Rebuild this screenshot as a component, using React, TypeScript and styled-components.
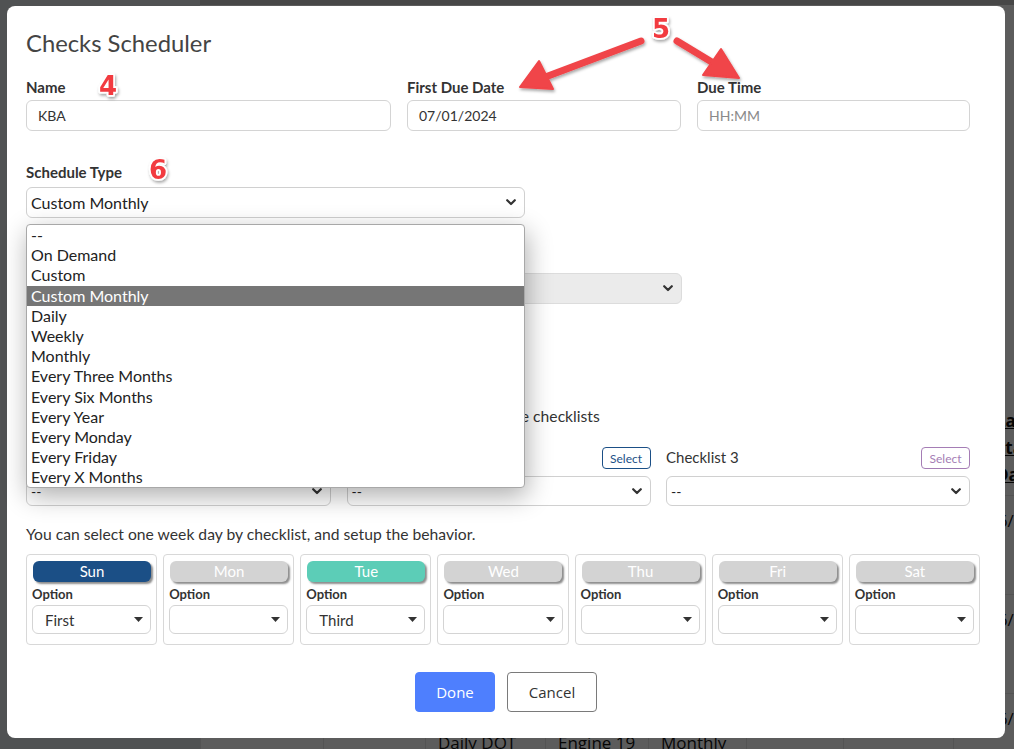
import React from "react";
import styled, { createGlobalStyle } from "styled-components";

const GlobalStyle = createGlobalStyle`
  html, body { margin: 0; padding: 0; }
  body { font-family: Lato, "Open Sans", Arial, sans-serif; background: #fff; }
  * { box-sizing: border-box; }
`;

const scheduleOptions = [
  "--",
  "On Demand",
  "Custom",
  "Custom Monthly",
  "Daily",
  "Weekly",
  "Monthly",
  "Every Three Months",
  "Every Six Months",
  "Every Year",
  "Every Monday",
  "Every Friday",
  "Every X Months",
];

const checklists = [
  { label: "Checklist 1", tone: "#3bb39c" },
  { label: "Checklist 2", tone: "#1b4f86" },
  { label: "Checklist 3", tone: "#a57db5" },
];

const days = [
  { name: "Sun", tone: "#1b4f86", value: "First" },
  { name: "Mon", tone: "#d3d3d3", value: "" },
  { name: "Tue", tone: "#5ccdb7", value: "Third" },
  { name: "Wed", tone: "#d3d3d3", value: "" },
  { name: "Thu", tone: "#d3d3d3", value: "" },
  { name: "Fri", tone: "#d3d3d3", value: "" },
  { name: "Sat", tone: "#d3d3d3", value: "" },
];

const rows = [
  ["", "", "Daily Walk", "Engine 12", "Weekly", "", "", "06/28/2024"],
  ["", "", "Pump Test", "Engine 7", "Daily", "", "", "06/29/2024"],
  ["", "", "Daily DOT", "Engine 19", "Monthly", "", "", "06/30/2024"],
];

/* ---------- page behind the modal ---------- */

const Page = styled.div`
  position: relative;
  width: 1014px;
  height: 749px;
  overflow: hidden;
  display: grid;
  grid-template-columns: 200px 1fr;
`;

const Sidebar = styled.aside`
  background: #dde2e7;
`;

const Main = styled.main`
  background: #fff;
  border-top: 5px solid #c4c4c4;
  padding-top: 395px;
  overflow: hidden;
`;

const Table = styled.table`
  border-collapse: collapse;
  table-layout: fixed;
  width: 1000px;
  font-family: "Open Sans", Arial, sans-serif;
  font-size: 17px;
  color: #111;
`;

const HeadCell = styled.th`
  height: 95px;
  padding: 0 0 0 42px;
  text-align: left;
  font-weight: 700;
  text-decoration: underline;
  line-height: 27px;
  white-space: pre-line;
  border-left: 1px solid #e6e6e6;
  border-bottom: 1px solid #e6e6e6;
`;

const Cell = styled.td`
  height: 99px;
  padding: 0 0 0 12px;
  border-left: 1px solid #e6e6e6;
  border-bottom: 1px solid #e6e6e6;
  line-height: 20px;
`;

const DateCell = styled(Cell)`
  vertical-align: top;
  padding: 15px 0 0 34px;
`;

const Backdrop = styled.div`
  position: absolute;
  inset: 0;
  background: rgba(0, 0, 0, 0.64);
`;

/* ---------- modal ---------- */

const Modal = styled.div`
  position: absolute;
  left: 7px;
  top: 6px;
  width: 998px;
  height: 732px;
  background: #fff;
  border-radius: 8px;
  padding: 22px 19px 0;
  color: #333;
`;

const Title = styled.h2`
  margin: 0;
  font-size: 23.8px;
  font-weight: 400;
  line-height: 30px;
  color: #444;
`;

const FieldRow = styled.div`
  display: grid;
  grid-template-columns: 365px 274px 273px;
  column-gap: 16px;
  margin-top: 20px;
`;

const Field = styled.div<{ $width?: number; $top?: number }>`
  position: relative;
  width: ${(p) => (p.$width ? `${p.$width}px` : "auto")};
  margin-top: ${(p) => p.$top ?? 0}px;
`;

const Label = styled.label<{ $gap?: number }>`
  display: block;
  font-size: 15px;
  font-weight: 700;
  line-height: 18px;
  color: #333;
  margin-bottom: ${(p) => p.$gap ?? 5}px;
`;

const TextInput = styled.div<{ $placeholder?: boolean }>`
  height: 31px;
  border: 1px solid #d4d4d4;
  border-radius: 6px;
  padding: 0 11px;
  display: flex;
  align-items: center;
  font-size: 14px;
  color: ${(p) => (p.$placeholder ? "#8a8a8a" : "#333")};
`;

const SelectBox = styled.div<{ $height?: number; $disabled?: boolean; $size?: number; $pad?: number }>`
  height: ${(p) => p.$height ?? 31}px;
  border: 1px solid ${(p) => (p.$disabled ? "#dcdcdc" : "#d0d0d0")};
  border-radius: 6px;
  background: ${(p) => (p.$disabled ? "#ebebeb" : "#fff")};
  padding: 0 8px 0 ${(p) => p.$pad ?? 4}px;
  display: flex;
  align-items: center;
  justify-content: space-between;
  font-size: ${(p) => p.$size ?? 16}px;
  color: #222;
`;

const OptionList = styled.ul`
  position: absolute;
  left: 0;
  top: calc(100% + 6px);
  width: 499px;
  margin: 0;
  padding: 0;
  list-style: none;
  background: #fff;
  border: 1px solid #a8a8a8;
  border-radius: 4px;
  box-shadow: 2px 8px 26px rgba(0, 0, 0, 0.32);
  z-index: 5;
  overflow: hidden;
`;

const OptionItem = styled.li<{ $active?: boolean }>`
  height: 20.2px;
  line-height: 20.2px;
  padding-left: 4px;
  font-size: 16px;
  color: ${(p) => (p.$active ? "#fff" : "#222")};
  background: ${(p) => (p.$active ? "#767676" : "transparent")};
`;

const Note = styled.p<{ $top: number }>`
  margin: ${(p) => p.$top}px 0 0;
  font-size: 15.7px;
  line-height: 20px;
  color: #333;
`;

const ChecklistGrid = styled.div`
  display: grid;
  grid-template-columns: 305px 304px 304px;
  column-gap: 15.5px;
  margin-top: 21px;
`;

const ChecklistHead = styled.div`
  height: 22px;
  display: flex;
  align-items: center;
  justify-content: space-between;
  margin-bottom: 7px;
`;

const ChecklistName = styled.span`
  font-size: 15px;
  line-height: 18px;
  margin-top: -3px;
  color: #333;
`;

const PickButton = styled.button<{ $tone: string }>`
  height: 22px;
  width: 49px;
  padding: 0;
  border: 1px solid ${(p) => p.$tone};
  border-radius: 4px;
  background: #fff;
  color: ${(p) => p.$tone};
  font-family: Lato, Arial, sans-serif;
  font-size: 12px;
`;

const DayGrid = styled.div`
  display: grid;
  grid-template-columns: repeat(7, 1fr);
  column-gap: 6px;
  width: 954px;
  margin-top: 10px;
`;

const DayCard = styled.div`
  height: 91px;
  border: 1px solid #d8d8d8;
  border-radius: 4px;
  padding: 6px 5px 10px;
`;

const DayPill = styled.div<{ $tone: string }>`
  height: 21px;
  width: 118px;
  margin-left: 1px;
  border-radius: 6px;
  background: ${(p) => p.$tone};
  color: #fff;
  font-size: 15px;
  line-height: 21px;
  text-align: center;
  box-shadow: 2px 2px 2px rgba(0, 0, 0, 0.45);
`;

const OptionLabel = styled.div`
  margin-top: 4px;
  font-size: 13px;
  font-weight: 700;
  line-height: 16px;
  color: #333;
`;

const DaySelect = styled.div`
  margin-top: 3px;
  height: 29px;
  border: 1px solid #d4d4d4;
  border-radius: 6px;
  padding: 0 7px 0 12px;
  display: flex;
  align-items: center;
  justify-content: space-between;
  font-size: 15px;
  color: #333;
`;

const Footer = styled.div`
  display: flex;
  justify-content: center;
  gap: 12px;
  margin-top: 27px;
`;

const ActionButton = styled.button<{ $primary?: boolean }>`
  height: 40px;
  width: ${(p) => (p.$primary ? 80 : 90)}px;
  border-radius: 4px;
  border: 1px solid ${(p) => (p.$primary ? "#4e7ffe" : "#7a7a7a")};
  background: ${(p) => (p.$primary ? "#4e7ffe" : "#fff")};
  color: ${(p) => (p.$primary ? "#fff" : "#333")};
  font-family: "Open Sans", Arial, sans-serif;
  font-size: 15px;
`;

const Annotations = styled.svg`
  position: absolute;
  inset: 0;
  pointer-events: none;
  z-index: 10;
`;

function Chevron() {
  return (
    <svg width="10" height="7" viewBox="0 0 10 7">
      <path d="M1.2 1.2 L5 5 L8.8 1.2" fill="none" stroke="#333" strokeWidth="2.2" strokeLinecap="round" strokeLinejoin="round" />
    </svg>
  );
}

function Caret() {
  return (
    <svg width="9" height="5" viewBox="0 0 9 5">
      <path d="M0 0 L9 0 L4.5 5 Z" fill="#333" />
    </svg>
  );
}

function Marker({ x, y, text }: { x: number; y: number; text: string }) {
  return (
    <text
      x={x}
      y={y}
      fontFamily="DejaVu Sans, sans-serif"
      fontWeight="700"
      fontSize="26"
      fill="#f23b40"
      stroke="#fff"
      strokeWidth="3.5"
      strokeLinejoin="round"
      style={{ paintOrder: "stroke" }}
      filter="url(#soft)"
    >
      {text}
    </text>
  );
}

export default function App() {
  return (
    <>
      <GlobalStyle />
      <Page>
        <Sidebar />
        <Main>
          <Table>
            <colgroup>
              {[123, 102, 120, 103, 98, 97, 110, 247].map((w, i) => (
                <col key={i} style={{ width: w }} />
              ))}
            </colgroup>
            <thead>
              <tr>
                {["", "", "Name", "Vehicle", "Type", "", "", "Last\nStatus\nDate"].map((h, i) => (
                  <HeadCell key={i}>{h}</HeadCell>
                ))}
              </tr>
            </thead>
            <tbody>
              {rows.map((r, i) => (
                <tr key={i}>
                  {r.map((c, j) => (j === 7 ? <DateCell key={j}>{c}</DateCell> : <Cell key={j}>{c}</Cell>))}
                </tr>
              ))}
            </tbody>
          </Table>
        </Main>
        <Backdrop />

        <Modal>
          <Title>Checks Scheduler</Title>

          <FieldRow>
            <Field>
              <Label $gap={4}>Name</Label>
              <TextInput>KBA</TextInput>
            </Field>
            <Field>
              <Label $gap={4}>First Due Date</Label>
              <TextInput>07/01/2024</TextInput>
            </Field>
            <Field>
              <Label $gap={4}>Due Time</Label>
              <TextInput $placeholder>HH:MM</TextInput>
            </Field>
          </FieldRow>

          <Field $width={499} $top={32}>
            <Label $gap={6}>Schedule Type</Label>
            <SelectBox>
              <span>Custom Monthly</span>
              <Chevron />
            </SelectBox>
            <OptionList>
              {scheduleOptions.map((o) => (
                <OptionItem key={o} $active={o === "Custom Monthly"}>
                  {o}
                </OptionItem>
              ))}
            </OptionList>
          </Field>

          <Field $width={656} $top={28}>
            <Label $gap={9}>Day of Month</Label>
            <SelectBox $disabled>
              <span />
              <Chevron />
            </SelectBox>
          </Field>

          <Field $top={23}>
            <Label>Repeat</Label>
          </Field>

          <Note $top={61}>Select the weekdays and the behavior for each one and select up to three checklists</Note>

          <ChecklistGrid>
            {checklists.map((c) => (
              <div key={c.label}>
                <ChecklistHead>
                  <ChecklistName>{c.label}</ChecklistName>
                  <PickButton $tone={c.tone}>Select</PickButton>
                </ChecklistHead>
                <SelectBox $height={30} $size={14}>
                  <span>--</span>
                  <Chevron />
                </SelectBox>
              </div>
            ))}
          </ChecklistGrid>

          <Note $top={18}>You can select one week day by checklist, and setup the behavior.</Note>

          <DayGrid>
            {days.map((d) => (
              <DayCard key={d.name}>
                <DayPill $tone={d.tone}>{d.name}</DayPill>
                <OptionLabel>Option</OptionLabel>
                <DaySelect>
                  <span>{d.value}</span>
                  <Caret />
                </DaySelect>
              </DayCard>
            ))}
          </DayGrid>

          <Footer>
            <ActionButton $primary>Done</ActionButton>
            <ActionButton>Cancel</ActionButton>
          </Footer>
        </Modal>

        <Annotations width="1014" height="749" viewBox="0 0 1014 749">
          <defs>
            <filter id="soft" x="-30%" y="-30%" width="160%" height="160%">
              <feDropShadow dx="1" dy="2" stdDeviation="1.5" floodColor="#000" floodOpacity="0.35" />
            </filter>
          </defs>
          <g filter="url(#soft)" fill="#f04448" stroke="#f04448">
            <line x1="641" y1="41" x2="548" y2="76" strokeWidth="7" strokeLinecap="round" />
            <polygon points="520,87 539,61 553,89" strokeWidth="2" strokeLinejoin="round" />
            <line x1="677" y1="41" x2="715" y2="64" strokeWidth="7" strokeLinecap="round" />
            <polygon points="739,78 721,49 703,75" strokeWidth="2" strokeLinejoin="round" />
          </g>
          <Marker x={99} y={95} text="4" />
          <Marker x={652} y={38} text="5" />
          <Marker x={149} y={179} text="6" />
        </Annotations>
      </Page>
    </>
  );
}
